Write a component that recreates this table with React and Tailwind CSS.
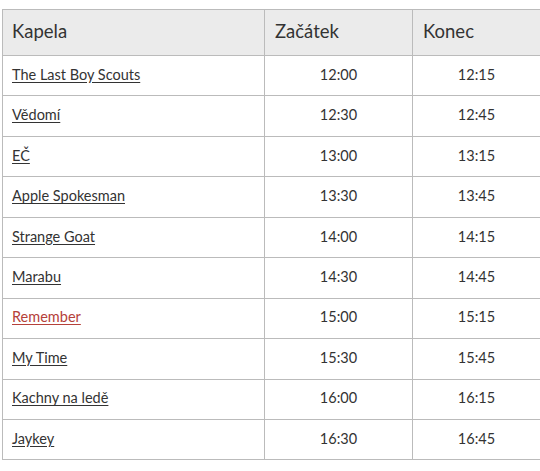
export default function App() {
  const rows = [
    ["The Last Boy Scouts", "12:00", "12:15"],
    ["Vědomí", "12:30", "12:45"],
    ["EČ", "13:00", "13:15"],
    ["Apple Spokesman", "13:30", "13:45"],
    ["Strange Goat", "14:00", "14:15"],
    ["Marabu", "14:30", "14:45"],
    ["Remember", "15:00", "15:15"],
    ["My Time", "15:30", "15:45"],
    ["Kachny na ledě", "16:00", "16:15"],
    ["Jaykey", "16:30", "16:45"],
  ];
  return (
    <div className="w-[540px] h-[471px] bg-white pt-[9px] pl-[2px]" style={{ fontFamily: "Lato, 'Open Sans', sans-serif" }}>
      <table className="border-collapse w-[538px] table-fixed text-[#333]">
        <colgroup>
          <col className="w-[262px]" />
          <col className="w-[148px]" />
          <col className="w-[128px]" />
        </colgroup>
        <thead>
          <tr className="bg-[#ebebeb] h-[46px]">
            <th className="border border-[#bbbbbb] text-left font-normal text-[18.5px] pl-[9px] pb-[2px]">Kapela</th>
            <th className="border border-[#bbbbbb] text-left font-normal text-[18.5px] pl-[10px] pb-[2px]">Začátek</th>
            <th className="border border-[#bbbbbb] text-left font-normal text-[18.5px] pl-[10px] pb-[2px]">Konec</th>
          </tr>
        </thead>
        <tbody>
          {rows.map(([name, a, b]) => (
            <tr key={name} className="h-[40.45px]">
              <td className="border border-[#bbbbbb] pl-[9px] text-[14.5px] pb-[2px]">
                <a href="#" className={`underline underline-offset-2 ${name === "Remember" ? "text-[#b5413a]" : "text-[#333]"}`}>{name}</a>
              </td>
              <td className="border border-[#bbbbbb] text-center text-[14.5px] pb-[2px]">{a}</td>
              <td className="border border-[#bbbbbb] text-center text-[14.5px] pb-[2px]">{b}</td>
            </tr>
          ))}
        </tbody>
      </table>
    </div>
  );
}
